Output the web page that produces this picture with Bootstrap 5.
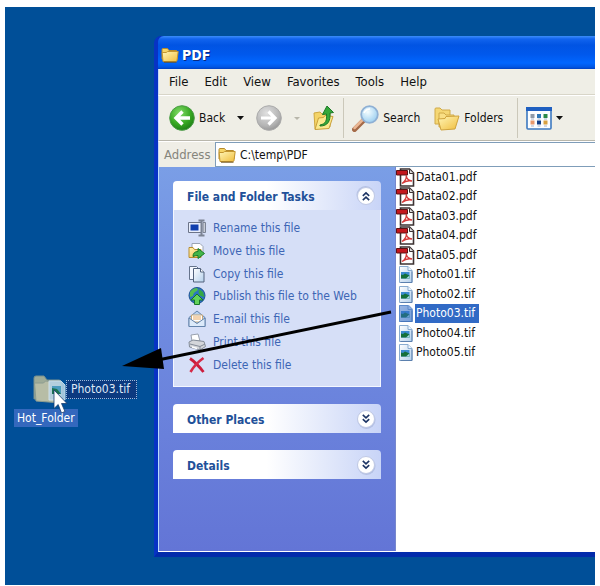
<!DOCTYPE html>
<html lang="en">
<head>
<meta charset="utf-8">
<meta name="viewport" content="width=device-width, initial-scale=1">
<title>PDF</title>
<link href="https://cdn.jsdelivr.net/npm/bootstrap@5.3.0/dist/css/bootstrap.min.css" rel="stylesheet">
<style>
body{font:12px/16px "DejaVu Sans Condensed","DejaVu Sans",sans-serif;color:#111;background:#fff;padding:7px 5px 1px}
button{font:inherit;color:inherit;border:0;background:none;padding:0}
svg{display:block;flex:none}
.desktop{background:#004f98;padding:29px 0 28px 149px}
.xp-window{border:solid #0733c4;border-width:0 0 5px 4px;border-bottom-color:#022bab;border-radius:7px 0 0 0;background:#0733c4}
.titlebar{height:33px;padding:4px 3px 0;gap:3px;color:#fff;font-size:14px;font-weight:bold;text-shadow:1px 1px #0a2a80;border-radius:6px 0 0 0;background:linear-gradient(#3b8cfa 0,#1164ee 3px,#0154e3 9px,#0058ec 18px,#0066ff 27px,#0056e4 31px,#0040c0 33px)}
.chrome-bar{background:#efeee6;border-left:1px solid #c5d9f5}
.menubar{height:26px;padding:0 10px;gap:16px;font-size:13px;border-bottom:1px solid #d8d5c8}
.toolbar{height:46px;padding:0 10px;border-top:1px solid #fff;border-bottom:1px solid #b9b7ac}
.wide-gap{margin-left:14px}
.sep{width:1px;height:40px;background:#cbc8ba}
.address{height:26px;padding-left:5px;color:#85857c;border-top:1px solid #fff;font-size:13px}
.address label{width:51px}
.addr-box{border:1px solid #7f9db9;border-right:0;background:#fff;padding-left:2px;gap:4px}
.addr-box input{border:0;outline:0;background:none;padding:0;color:#111;font-size:12px;min-width:0}
.content{background:#fff;border-left:1px solid #b9dcfa;border-bottom:1px solid #fff}
.sidebar{width:237px;padding:14px;background:linear-gradient(#7a9ee6,#6f8be0 40%,#6375d6);border-right:1px solid #7787cc}
.panel-head{height:29px;padding:0 5px 0 14px;border-radius:4px 4px 0 0;background:linear-gradient(90deg,#fff 45%,#c8d4f7);color:#215099;font-weight:bold}
.panel-head span{padding-top:2px}
.panel-head + ul{min-height:177px;margin:0;padding:9px 14px 12px;background:#d6dff7;border:1px solid #f4f7ff;border-top:0}
.tasks a{color:#3d66b5;text-decoration:none;gap:7px}
.panel-gap{margin-bottom:17px}
.files{min-height:195px;padding:1px 0 0;margin:0}
.files button{height:19px}
.files button span{padding:0 4px 0 1px;line-height:19px}
.files .picked span{background:#316ac5;color:#fff}
.drop-folder{position:absolute;left:9px;top:366px;color:#fff}
.drop-folder .caption-box{background:#3468bd;padding:0 3px;line-height:18px}
.drop-folder svg{margin-left:17px}
.drag-label{position:absolute;left:61px;top:373px;height:19px;line-height:17px;padding:0 6px 0 4px;background:#0c3a80;color:#dfe8f6;border:1px dotted #9db9dc}
.pointer{position:absolute;left:48px;top:382px}
.drag-arrow{position:absolute;left:115px;top:299px}
</style>
<script src="https://cdn.jsdelivr.net/npm/bootstrap@5.3.0/dist/js/bootstrap.bundle.min.js"></script>
</head>
<body class="min-vh-100 d-flex flex-column">
<svg width="0" height="0" class="position-absolute" aria-hidden="true">
<defs>
<linearGradient id="gold" x1="0" y1="0" x2="1" y2="1"><stop stop-color="#fff6b8"/><stop offset="1" stop-color="#f0bd3c"/></linearGradient>
<radialGradient id="green" cx=".4" cy=".3" r=".75"><stop stop-color="#84dc6a"/><stop offset=".6" stop-color="#37a822"/><stop offset="1" stop-color="#1a7a14"/></radialGradient>
<radialGradient id="grey" cx=".4" cy=".3" r=".75"><stop stop-color="#e0e0e0"/><stop offset=".7" stop-color="#b4b4b4"/><stop offset="1" stop-color="#929292"/></radialGradient>
<radialGradient id="lens" cx=".4" cy=".35" r=".7"><stop stop-color="#f4fdff"/><stop offset="1" stop-color="#98cdf0"/></radialGradient>
<linearGradient id="sheet" x1="0" y1="0" x2="1" y2="1"><stop stop-color="#fff"/><stop offset="1" stop-color="#b4d0ec"/></linearGradient>
<symbol id="folder" viewBox="0 0 18 16"><path d="M1 12V2.500Q1 1.500 2 1.500h4.500l1.500 2h7q1 0 1 1V12z" fill="#f6d566" stroke="#b58a2c"/><path d="M2 14.500 1.200 5.500h4l1.500-1h10.500L16 13.500q-.2 1-1.200 1z" fill="url(#gold)" stroke="#c3952f"/><path d="M3 15.200h12.500" stroke="#70541e" stroke-width="1"/></symbol>
<symbol id="pdf" viewBox="0 0 19 19"><path d="M4.500 1h9l4 4v13h-13z" fill="#fff" stroke="#3c3232" stroke-width="1.600"/><path d="M13.500 1.500v4h4" fill="#ddd" stroke="#3c3232"/><path d="M6 15.500c3-2 4.500-5 4.300-8 .2 3 2 5 5.700 5.500-4-.8-7 0-10 2.500z" fill="#fff" stroke="#d63a3a" stroke-width="1.300"/><path d="M.5 2.500h11v4.500H.5z" fill="#c3161c" stroke="#5c1012"/></symbol>
<symbol id="tif" viewBox="0 0 19 19"><path d="M3.500 1.500h8.500l4 4v12H3.500z" fill="url(#sheet)" stroke="#8aacd0"/><path d="M12 1.500v4h4" fill="#eef6ff" stroke="#8aacd0"/><path d="M4.500 17.500h11.500v-11" fill="none" stroke="#5c80ae"/><path d="M5 7h8.500v6.500H5z" fill="#3c8bd0"/><path d="M5 9.500l2 .5 2-1.500 4.500 2v3H5z" fill="#15703a"/><path d="M5 13.500h5l3.500-3v3z" fill="#a8dce8"/></symbol>
<symbol id="chev" viewBox="0 0 20 20"><circle cx="10.500" cy="11" r="9" fill="#9aa8d0" opacity=".5"/><circle cx="10" cy="10" r="8.500" fill="#fff" stroke="#c0c9e4"/><path d="M6.800 5.800l3.200 3 3.200-3M6.800 10.200l3.200 3 3.200-3" fill="none" stroke="#1c3464" stroke-width="1.600"/></symbol>
</defs></svg>

<main class="desktop position-relative flex-grow-1 d-flex">
<section class="xp-window flex-grow-1 d-flex flex-column" aria-label="PDF">
  <header class="titlebar d-flex align-items-center"><svg width="18" height="16"><use href="#folder"/></svg><span>PDF</span></header>
  <nav class="chrome-bar menubar d-flex align-items-center" aria-label="Menu">
    <button>File</button><button>Edit</button><button>View</button><button>Favorites</button><button>Tools</button><button>Help</button>
  </nav>
  <div class="chrome-bar toolbar d-flex align-items-center">
    <button class="d-flex align-items-center gap-1"><svg width="26" height="26" viewBox="0 0 26 26"><circle cx="13" cy="13" r="12.300" fill="url(#green)" stroke="#4b9b46"/><path d="M21 13H8M13.500 6.500L7 13l6.500 6.500" fill="none" stroke="#fff" stroke-width="3.400"/></svg><span>Back</span></button>
    <button class="ms-2 px-1" aria-label="Back history"><svg width="7" height="4"><path d="M0 0h7L3.500 4z" fill="#111"/></svg></button>
    <button class="ms-2" aria-label="Forward"><svg width="26" height="26" viewBox="0 0 26 26"><circle cx="13" cy="13" r="12.300" fill="url(#grey)" stroke="#aaa"/><path d="M5 13h13M12.500 6.500L19 13l-6.500 6.500" fill="none" stroke="#fff" stroke-width="3.200"/></svg></button>
    <button class="ms-2 px-1" aria-label="Forward history"><svg width="6" height="3"><path d="M0 0h6L3 3z" fill="#b8b6aa"/></svg></button>
    <button class="ms-2" aria-label="Up"><svg width="23" height="28" viewBox="0 0 23 28"><path d="M2 9l6-1 2 2 8-1v14L3 25z" fill="#f4d468" stroke="#cfa840"/><path d="M3 25.500L6.500 14l5-.5 1.500-2 8 1-4 12z" fill="#fbe98e" stroke="#caa03a"/><path d="M8 21c6-1 7-5 6.500-11l-4 .5L15 2l6.500 6.500-3.500.5c.5 8-2 13-10 13z" fill="#35a83a" stroke="#1b7a26"/></svg></button>
    <span class="sep ms-2"></span>
    <button class="d-flex align-items-center gap-1 ms-2"><svg width="27" height="27" viewBox="0 0 27 27"><path d="M12 15L2.500 24.500" stroke="#a46a48" stroke-width="5" stroke-linecap="round"/><path d="M11 14.500L2.500 23" stroke="#eab795" stroke-width="2.500" stroke-linecap="round"/><circle cx="17.500" cy="9.500" r="8.300" fill="url(#lens)" stroke="#8fb0d4" stroke-width="1.800"/><path d="M12 8q2-4 6-4" fill="none" stroke="#fff" stroke-width="1.600"/></svg><span>Search</span></button>
    <button class="d-flex align-items-center gap-1 wide-gap"><svg width="26" height="25" viewBox="0 0 26 25"><path d="M1 18V3q0-1 1-1h4l2 2h8v14z" fill="#f5d774" stroke="#d0aa48"/><path d="M5 21V7h5l2 2h8v12z" fill="#f9df85" stroke="#d0aa48"/><path d="M7 24L4 13l7-.5 1-2 13-.5-4 13z" fill="url(#gold)" stroke="#cfa33c"/></svg><span>Folders</span></button>
    <span class="sep wide-gap"></span>
    <button class="d-flex align-items-center gap-1 ms-2" aria-label="Views"><svg width="26" height="23" viewBox="0 0 26 23"><rect x="1" y="1" width="24" height="21" rx="1" fill="#fbfdff" stroke="#3c78c0" stroke-width="1.600"/><path d="M0 0h26v4H0z" fill="#1f5fc0"/><path d="M4.500 7h4v4h-4z" fill="#8f9aa8"/><path d="M11 7h4v4h-4z" fill="#2f78b8"/><path d="M17.500 7h4v4h-4z" fill="#2a8a48"/><path d="M4.500 13.500h4v4h-4z" fill="#e8986c"/><path d="M11 13.500h4v4h-4z" fill="#123e88"/><path d="M17.500 13.500h4v4h-4z" fill="#d8a040"/><path d="M5 12h3M11.500 12h3M18 12h3M5 19h3M11.500 19h3M18 19h3" stroke="#aab4c8"/></svg><svg width="7" height="4"><path d="M0 0h7L3.500 4z" fill="#111"/></svg></button>
  </div>
  <div class="chrome-bar address d-flex"><label for="addr" class="align-self-center">Address</label>
    <div class="addr-box flex-grow-1 d-flex align-items-center"><svg width="18" height="16"><use href="#folder"/></svg><input id="addr" class="flex-grow-1" value="C:\temp\PDF"></div></div>
  <div class="content flex-grow-1 d-flex">
    <aside class="sidebar flex-shrink-0">
      <section class="tasks panel-gap">
        <div class="panel-head d-flex align-items-center justify-content-between"><span>File and Folder Tasks</span><button aria-label="Collapse"><svg width="20" height="20" viewBox="0 0 20 20"><use href="#chev" transform="rotate(180 10 10)"/></svg></button></div>
        <ul class="list-unstyled d-flex flex-column justify-content-between">
          <li><a href="#" class="d-flex align-items-center"><svg width="18" height="18" viewBox="0 0 18 18"><path d="M.5 3.500h13v10H.5z" fill="#e8eefc" stroke="#6c7488"/><path d="M2.500 5.500h8v6h-8z" fill="#103fae"/><path d="M10.500 1.500h6M13.500 1.500v15M10.500 16.500h6" stroke="#7c8494" stroke-width="2"/><path d="M15 3.500h2.500v10H15z" fill="#c8ccd6" stroke="#7c8494"/></svg>Rename this file</a></li>
          <li><a href="#" class="d-flex align-items-center"><svg width="18" height="18" viewBox="0 0 18 18"><path d="M4 1.500h8l3 3V12H4z" fill="#fff" stroke="#9aa4b4"/><path d="M1 15.500V5.500h4l1.500 2H13v8z" fill="url(#gold)" stroke="#b88c30"/><path d="M5 14.500q0-5 5-5V6.500l6.500 5-6.500 5v-3q-3 0-5 1z" fill="#43b649" stroke="#187a28"/></svg>Move this file</a></li>
          <li><a href="#" class="d-flex align-items-center"><svg width="18" height="18" viewBox="0 0 18 18"><path d="M1.500 1.500h7l3 3v10h-10z" fill="#f4f8ff" stroke="#66748c"/><path d="M5.500 3.500h7l3.500 3.500v10H5.500z" fill="url(#sheet)" stroke="#52627c"/><path d="M12.500 3.500v3.500H16" fill="#fff" stroke="#52627c"/></svg>Copy this file</a></li>
          <li><a href="#" class="d-flex align-items-center"><svg width="18" height="18" viewBox="0 0 18 18"><circle cx="9" cy="8.500" r="8" fill="#2b72c4" stroke="#1e5490"/><path d="M2 5q3-4 7-4 2 2-1 3.500T5 9L2 10z" fill="#54bd50"/><path d="M11 2l4 3 1.500 5-4-1-2-3z" fill="#36a844"/><path d="M9 7l6 6h-3.500v4.500h-5V13H3z" fill="#62d25a" stroke="#17762a"/></svg>Publish this file to the Web</a></li>
          <li><a href="#" class="d-flex align-items-center"><svg width="18" height="18" viewBox="0 0 18 18"><path d="M1 7.500L9 1l8 6.500v9H1z" fill="#b7d2f0" stroke="#6484ac"/><path d="M3.500 5h11v7h-11z" fill="#fff" stroke="#c8a878"/><path d="M5 7h8M5 9h8" stroke="#e8a860"/><path d="M1 8l8 5.500L17 8v8.500H1z" fill="#dceafa" stroke="#6484ac"/></svg>E-mail this file</a></li>
          <li><a href="#" class="d-flex align-items-center"><svg width="18" height="18" viewBox="0 0 18 18"><path d="M4 8l-1-6 7-1 2 7z" fill="#fff" stroke="#98a0ae"/><path d="M1 9l4-2 11 1.500 1.500 5L12 17 1.500 14z" fill="#d4d6da" stroke="#848c98"/><path d="M2 11l10 2.500 5-2.500M12 13.500V17" fill="none" stroke="#848c98"/><path d="M4 14l5 1.500" stroke="#fff" stroke-width="1.500"/></svg>Print this file</a></li>
          <li><a href="#" class="d-flex align-items-center"><svg width="18" height="18" viewBox="0 0 18 18"><path d="M2 2.500q6 4 13.500 13.500" stroke="#cc1c3c" stroke-width="2.800" fill="none"/><path d="M15.500 2Q7 8 2.500 16" stroke="#d62a48" stroke-width="2.600" fill="none"/></svg>Delete this file</a></li>
        </ul>
      </section>
      <section class="panel-gap"><div class="panel-head d-flex align-items-center justify-content-between"><span>Other Places</span><button aria-label="Expand Other Places"><svg width="20" height="20"><use href="#chev"/></svg></button></div></section>
      <section><div class="panel-head d-flex align-items-center justify-content-between"><span>Details</span><button aria-label="Expand Details"><svg width="20" height="20"><use href="#chev"/></svg></button></div></section>
    </aside>
    <div><ul class="files list-unstyled d-flex flex-column justify-content-between">
      <li><button class="d-flex"><svg width="19" height="19"><use href="#pdf"/></svg><span>Data01.pdf</span></button></li>
      <li><button class="d-flex"><svg width="19" height="19"><use href="#pdf"/></svg><span>Data02.pdf</span></button></li>
      <li><button class="d-flex"><svg width="19" height="19"><use href="#pdf"/></svg><span>Data03.pdf</span></button></li>
      <li><button class="d-flex"><svg width="19" height="19"><use href="#pdf"/></svg><span>Data04.pdf</span></button></li>
      <li><button class="d-flex"><svg width="19" height="19"><use href="#pdf"/></svg><span>Data05.pdf</span></button></li>
      <li><button class="d-flex"><svg width="19" height="19"><use href="#tif"/></svg><span>Photo01.tif</span></button></li>
      <li><button class="d-flex"><svg width="19" height="19"><use href="#tif"/></svg><span>Photo02.tif</span></button></li>
      <li><button class="d-flex picked"><svg width="19" height="19"><use href="#tif"/><path d="M3 1h10l4 4v13H3z" fill="#316ac5" opacity=".5"/></svg><span>Photo03.tif</span></button></li>
      <li><button class="d-flex"><svg width="19" height="19"><use href="#tif"/></svg><span>Photo04.tif</span></button></li>
      <li><button class="d-flex"><svg width="19" height="19"><use href="#tif"/></svg><span>Photo05.tif</span></button></li>
    </ul></div>
  </div>
</section>

<button class="drop-folder text-start"><svg width="38" height="36" viewBox="0 0 38 36"><path d="M3 26V5q0-2 2-2h8l3 4h12q2 0 2 2v17z" fill="#9eab98" stroke="#76908e"/><path d="M5 28L3.500 10h9l2-2L30 9.500V30z" fill="#b7bda6" stroke="#8c9c90"/><path d="M18 8h12l4 4v15H18z" fill="#b4d2e4" opacity=".9" stroke="#d4e6f2"/><path d="M21 13h9v8h-9z" fill="#4c9cbe"/><path d="M21 15l5 1 4 5h-9z" fill="#1c7452"/></svg><span class="caption-box d-block">Hot_Folder</span></button>
<span class="drag-label">Photo03.tif</span>
<svg class="pointer" width="15" height="26" viewBox="0 0 15 26"><path d="M1 1v18.500l4.200-4 3.300 8.500 3.500-1.500-3.500-8H14z" fill="#fff" stroke="#173c6e" stroke-width=".8"/></svg>
<svg class="drag-arrow" width="272" height="66" viewBox="0 0 272 66"><path d="M271 6L38 54" stroke="#000" stroke-width="3"/><path d="M2 60L41 42l3 21z"/></svg>
</main>
</body>
</html>
